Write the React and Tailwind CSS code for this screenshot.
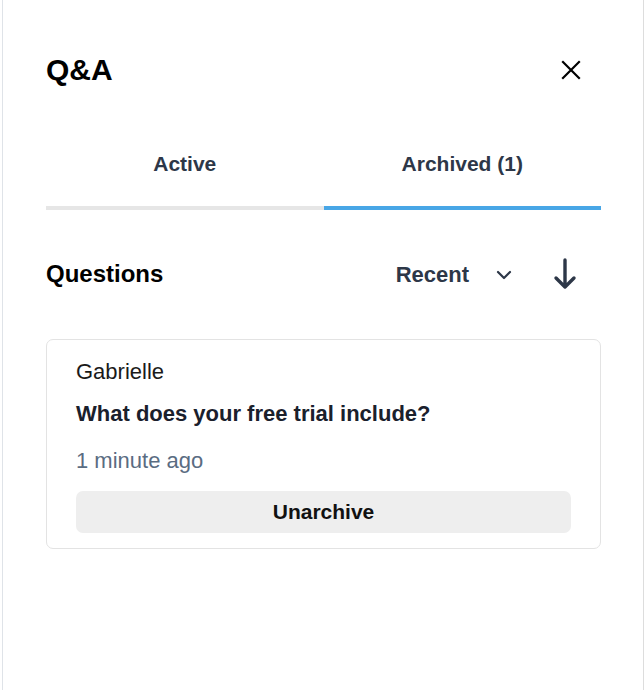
import React from "react";

export default function App() {
  return (
    <div className="w-full h-[690px] bg-white flex" style={{ fontFamily: '"Liberation Sans", Arial, sans-serif' }}>
      <div className="ml-[2px] w-[642px] h-full border-l border-l-[#dfe3e8] border-r border-r-[#dddddd] pl-[43px] pr-[42px] flex flex-col">
        {/* Header */}
        <div className="mt-[40px] h-[60px] flex items-center justify-between">
          <h1 className="text-[30px] leading-[34px] font-bold text-black">Q&amp;A</h1>
          <button className="w-[40px] h-[40px] flex items-center justify-center mr-[10px]">
            <svg width="20" height="20" viewBox="0 0 20 20" fill="none" stroke="#000" strokeWidth="2.2" strokeLinecap="square">
              <path d="M2 2 L18 18 M18 2 L2 18" />
            </svg>
          </button>
        </div>

        {/* Tabs */}
        <div className="flex">
          <div className="flex-1 flex flex-col items-center pt-[50px] pb-[28px] border-b-[4px] border-b-[#e6e6e6]">
            <span className="text-[21px] leading-[28px] font-bold text-[#2d3748]">Active</span>
          </div>
          <div className="flex-1 flex flex-col items-center pt-[50px] pb-[28px] border-b-[4px] border-b-[#48a6e6]">
            <span className="text-[21px] leading-[28px] font-bold text-[#2d3748]">Archived (1)</span>
          </div>
        </div>

        {/* Questions row */}
        <div className="mt-[44px] h-[40px] flex items-center">
          <h2 className="text-[24px] leading-[30px] font-bold text-black flex-1">Questions</h2>
          <span className="text-[22px] leading-[28px] font-bold text-[#2d3748] mt-[2px]">Recent</span>
          <svg className="ml-[27px] mt-[2px]" width="16" height="10" viewBox="0 0 16 10" fill="none" stroke="#2d3748" strokeWidth="2.2" strokeLinecap="round" strokeLinejoin="round">
            <path d="M2 2 L8 8 L14 2" />
          </svg>
          <svg className="ml-[40px] mr-[23px]" width="26" height="32" viewBox="0 0 26 32" fill="none" stroke="#2d3748" strokeWidth="3.4" strokeLinecap="round" strokeLinejoin="round">
            <path d="M13 2 L13 29 M4 20 L13 29 L22 20" />
          </svg>
        </div>

        {/* Card */}
        <div className="mt-[45px] border border-[#e3e3e3] rounded-[7px] px-[29px] pt-[18px] pb-[15px] flex flex-col">
          <div className="text-[22px] leading-[28px] text-[#1a1a1a]">Gabrielle</div>
          <div className="mt-[14px] text-[22px] leading-[28px] font-bold text-[#1a202c]">What does your free trial include?</div>
          <div className="mt-[19px] text-[22px] leading-[28px] text-[#5a6c82]">1 minute ago</div>
          <button className="mt-[16px] h-[42px] rounded-[7px] bg-[#eeeeee] flex items-center justify-center">
            <span className="text-[21px] leading-[28px] font-bold text-[#111111]">Unarchive</span>
          </button>
        </div>
      </div>
    </div>
  );
}
